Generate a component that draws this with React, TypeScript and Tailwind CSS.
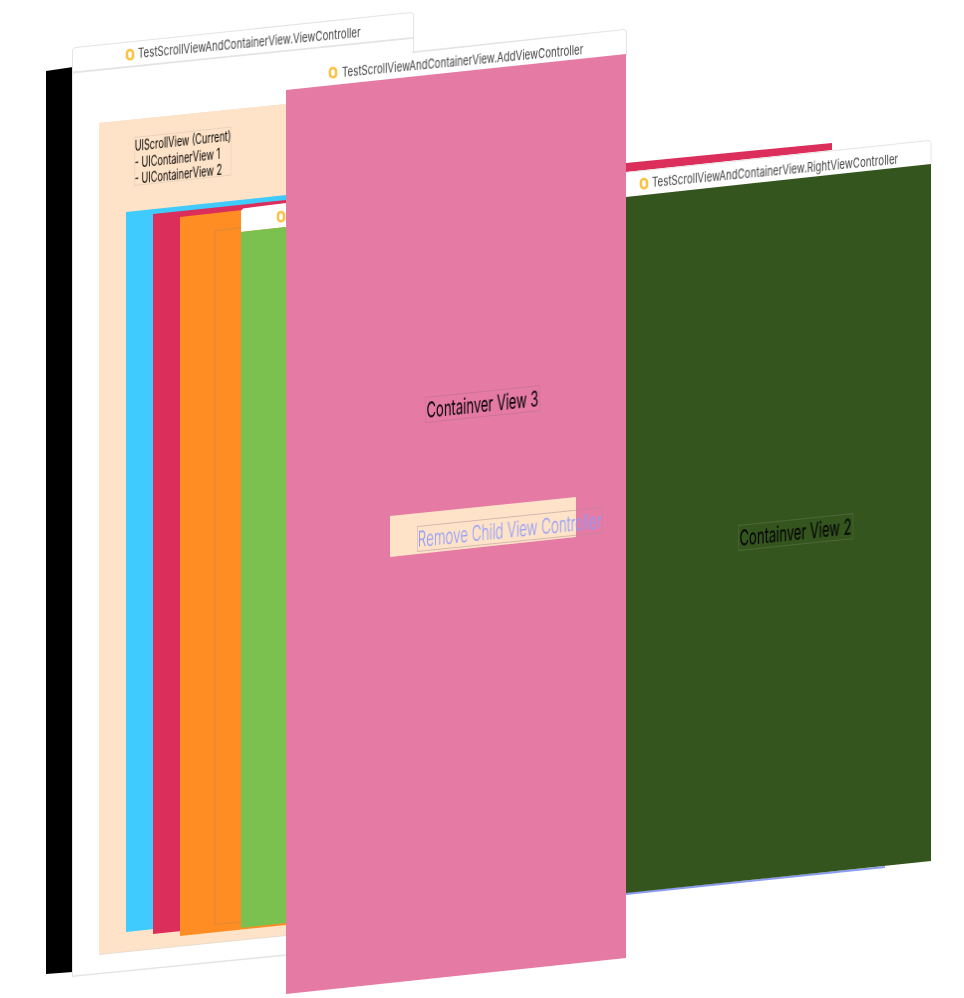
function Ring({ className }: { className: string }) {
  return (
    <svg className={className} width="10" height="13" viewBox="0 0 10 13" fill="none">
      <rect x="2" y="2" width="6" height="9.2" rx="3" stroke="#FBC347" strokeWidth="2.6" />
    </svg>
  );
}

export default function App() {
  return (
    <div className="relative w-[964px] h-[998px] overflow-hidden bg-white [font-family:Inter,sans-serif]">
      {/* black window */}
      <div className="absolute left-[46px] top-[67px] w-[27px] h-[907px] bg-black [clip-path:polygon(0px_4px,27px_0px,27px_905px,0px_907px)]" />

      {/* ViewController scene */}
      <div className="absolute left-[72px] top-[12px] w-[342px] h-[965px] bg-[#e4e4e4] [clip-path:polygon(0px_38px,3px_35px,339px_0px,342px_2px,342px_931px,0px_965px)]" />
      <div className="absolute left-[72px] top-[12px] w-[342px] h-[965px] bg-white [clip-path:polygon(1px_38px,3.5px_36px,339px_1px,341px_2.5px,341px_929.5px,1px_963.5px)]" />
      <div className="absolute left-[73px] top-[37px] w-[340px] h-[37px] bg-[#e4e4e4] [clip-path:polygon(0px_34.5px,340px_0px,340px_1.8px,0px_36.5px)]" />
      <Ring className="absolute left-[125px] top-[47.5px]" />
      <div className="absolute left-[138px] top-[46px] whitespace-nowrap text-[13px] leading-[15px] text-[#444] blur-[0.3px] origin-top-left [transform:matrix(0.748,-0.071,0,1,0,0)]">
        TestScrollViewAndContainerView.ViewController
      </div>

      {/* scroll view */}
      <div className="absolute left-[99px] top-[104px] w-[187px] h-[851px] bg-[#e8dccf] [clip-path:polygon(0px_19px,187px_0px,187px_832px,0px_851px)]" />
      <div className="absolute left-[99px] top-[104px] w-[187px] h-[850px] bg-[#FEE3C8] [clip-path:polygon(0px_19px,187px_0px,187px_831px,0px_850px)]" />
      <div className="absolute left-[134px] top-[137px] w-[149px] h-[49px] border-[1.5px] border-[#e8d2ba] whitespace-pre text-[14px] leading-[16.5px] text-black blur-[0.3px] origin-top-left [transform:matrix(0.652,-0.07,0,1,0,0)]">
        {"UIScrollView (Current)\n- UIContainerView 1\n- UIContainerView 2"}
      </div>

      {/* nested containers */}
      <div className="absolute left-[126px] top-[195px] w-[160px] h-[737px] bg-[#40CBFE] [clip-path:polygon(0px_17px,160px_0px,160px_720px,0px_737px)]" />
      <div className="absolute left-[153px] top-[200px] w-[133px] h-[734px] bg-[#DC2E5A] [clip-path:polygon(0px_14px,133px_0px,133px_720px,0px_734px)]" />
      <div className="absolute left-[180px] top-[205px] w-[106px] h-[731px] bg-[#FF8D24] [clip-path:polygon(0px_12px,106px_0px,106px_720px,0px_731px)]" />
      <div className="absolute left-[214px] top-[227px] w-[27px] h-[698px] bg-[#E98A32] [clip-path:polygon(0px_3px,27px_0px,27px_696px,0px_698px)]" />
      <div className="absolute left-[214px] top-[227px] w-[27px] h-[698px] bg-[#FF8D24] [clip-path:polygon(1.5px_4.5px,27px_1.5px,27px_694.5px,1.5px_696.5px)]" />
      <div className="absolute left-[241px] top-[203px] w-[45px] h-[29px] bg-white [clip-path:polygon(0px_8px,2px_5.5px,45px_0px,45px_24px,0px_29px)]" />
      <Ring className="absolute left-[276px] top-[209.5px]" />
      <div className="absolute left-[241px] top-[227px] w-[45px] h-[701px] bg-[#7BC14F] [clip-path:polygon(0px_5px,45px_0px,45px_696px,0px_701px)]" />

      {/* RightViewController scene */}
      <div className="absolute left-[626px] top-[143px] w-[206px] h-[29px] bg-[#DC2E5A] [clip-path:polygon(0px_20px,206px_0px,206px_7px,0px_29px)]" />
      <div className="absolute left-[626px] top-[866px] w-[259px] h-[30px] bg-[#8A9CEF] [clip-path:polygon(0px_26.5px,259px_0px,259px_2px,0px_29px)]" />
      <div className="absolute left-[626px] top-[140px] w-[306px] h-[57px] bg-[#e4e4e4] [clip-path:polygon(0px_32px,303px_0px,305.5px_2px,305.5px_25px,0px_57px)]" />
      <div className="absolute left-[626px] top-[140px] w-[306px] h-[57px] bg-white [clip-path:polygon(0px_33px,303px_1px,304.5px_2.5px,304.5px_25px,0px_57px)]" />
      <Ring className="absolute left-[639px] top-[176.5px]" />
      <div className="absolute left-[652px] top-[175px] whitespace-nowrap text-[13px] leading-[15px] text-[#444] blur-[0.3px] origin-top-left [transform:matrix(0.748,-0.071,0,1,0,0)]">
        TestScrollViewAndContainerView.RightViewController
      </div>
      <div className="absolute left-[626px] top-[164px] w-[305px] h-[729px] bg-[#35551F] [clip-path:polygon(0px_33px,305px_0px,305px_697px,0px_729px)]" />
      <div className="absolute left-[738px] top-[525px] w-[195px] h-[26px] border-[1.5px] border-[#4a6836] flex items-center justify-center whitespace-nowrap text-[22px] text-black blur-[0.3px] origin-top-left [transform:matrix(0.59,-0.061,0,1,0,0)]">
        Containver View 2
      </div>

      {/* AddViewController scene */}
      <div className="absolute left-[412px] top-[29px] w-[215px] h-[38px] bg-[#e4e4e4] [clip-path:polygon(0px_22.5px,212px_0px,215px_2px,215px_26px,0px_38px)]" />
      <div className="absolute left-[286px] top-[29px] w-[340px] h-[62px] bg-white [clip-path:polygon(0px_38px,338px_1px,340px_2.5px,340px_26px,0px_62px)]" />
      <Ring className="absolute left-[328px] top-[65.5px]" />
      <div className="absolute left-[342px] top-[65px] whitespace-nowrap text-[13px] leading-[15px] text-[#444] blur-[0.3px] origin-top-left [transform:matrix(0.748,-0.071,0,1,0,0)]">
        TestScrollViewAndContainerView.AddViewController
      </div>
      <div className="absolute left-[286px] top-[54px] w-[340px] h-[940px] bg-[#E57BA4] [clip-path:polygon(0px_36px,340px_0px,340px_904px,0px_940px)]" />
      <div className="absolute left-[425px] top-[397px] w-[195px] h-[26px] border-[1.5px] border-[#cf7296] flex items-center justify-center whitespace-nowrap text-[22px] text-black blur-[0.3px] origin-top-left [transform:matrix(0.59,-0.061,0,1,0,0)]">
        Containver View 3
      </div>
      <div className="absolute left-[390px] top-[497px] w-[186px] h-[60px] bg-[#FEE3C8] [clip-path:polygon(0px_19px,186px_0px,186px_40px,0px_60px)]" />
      <div className="absolute left-[417px] top-[526px] w-[307px] h-[26px] border-[1.5px] border-[#b08a98]/50 flex items-center justify-center whitespace-nowrap text-[22px] font-light text-[#8a99ff] blur-[0.3px] origin-top-left [transform:matrix(0.605,-0.062,0,1,0,0)]">
        Remove Child View Controller
      </div>
    </div>
  );
}
